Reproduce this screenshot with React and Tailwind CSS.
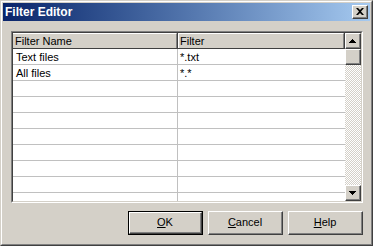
import React from "react";

// classic win2k bevels
const raised = "border border-t-white border-l-white border-r-[#404040] border-b-[#404040]";
const raisedInner = "border border-t-[#d4d0c8] border-l-[#d4d0c8] border-r-[#808080] border-b-[#808080]";

const rows = [
  { name: "Text files", filter: "*.txt" },
  { name: "All files", filter: "*.*" },
];

function ScrollButton({ dir }) {
  return (
    <div className={`w-[16px] h-[16px] bg-[#d4d0c8] ${raised}`}>
      <div className={`w-full h-full flex items-center justify-center ${raisedInner} border-t-0 border-l-0`}>
        <svg width="7" height="4" viewBox="0 0 7 4">
          {dir === "up" ? (
            <path d="M3 0h1v1h1v1h1v1h1v1H0V3h1V2h1V1h1z" fill="#000" />
          ) : (
            <path d="M0 0h7v1H6v1H5v1H4v1H3V3H2V2H1V1H0z" fill="#000" />
          )}
        </svg>
      </div>
    </div>
  );
}

function DlgButton({ children, isDefault }) {
  const inner = (
    <div className={`w-full h-full bg-[#d4d0c8] ${raised}`}>
      <div className={`w-full h-full flex items-center justify-center ${raisedInner} border-t-0 border-l-0 text-[11px] text-black`}>
        {children}
      </div>
    </div>
  );
  return isDefault ? (
    <div className="w-[75px] h-[24px] border border-black">{inner}</div>
  ) : (
    <div className="w-[75px] h-[24px]">{inner}</div>
  );
}

export default function App() {
  const blank = Array.from({ length: 8 });
  return (
    <div className="w-[373px] h-[246px] bg-[#d4d0c8] border border-t-[#d4d0c8] border-l-[#d4d0c8] border-r-[#404040] border-b-[#404040] font-['Liberation_Sans',Arial,sans-serif] select-none">
      <div className="w-full h-full border border-t-white border-l-white border-r-[#808080] border-b-[#808080] p-px flex flex-col">
        {/* title bar */}
        <div className="h-[18px] bg-linear-to-r from-[#0a246a] to-[#a6caf0] flex items-center justify-between pl-[2px] pr-[2px]">
          <span className="text-white font-bold text-[12px] leading-none">Filter Editor</span>
          <div className={`w-[16px] h-[14px] bg-[#d4d0c8] ${raised}`}>
            <div className={`w-full h-full flex items-center justify-center ${raisedInner} border-t-0 border-l-0`}>
              <svg width="8" height="7" viewBox="0 0 8 7">
                <path d="M0 0h2l2 2 2-2h2L5 3.5 8 7H6L4 5 2 7H0l3-3.5z" fill="#000" />
              </svg>
            </div>
          </div>
        </div>

        <div className="flex-1 flex flex-col pl-[8px] pr-[7px] pt-[10px]">
          {/* grid */}
          <div className="h-[172px] border border-t-[#808080] border-l-[#808080] border-r-white border-b-white">
            <div className="w-full h-full border border-t-[#404040] border-l-[#404040] border-r-[#d4d0c8] border-b-[#d4d0c8] flex bg-white">
              <div className="flex-1 flex flex-col overflow-hidden">
                <div className="h-[16px] flex bg-[#d4d0c8] text-[11px] text-black border-b border-[#404040]">
                  <div className="w-[165px] border-r border-[#404040]">
                    <div className="h-full border-r border-[#808080] border-t border-t-white pl-[2px] leading-[13px] pt-px">Filter Name</div>
                  </div>
                  <div className="flex-1 border-r border-[#404040]">
                    <div className="h-full border-r border-[#808080] border-t border-t-white border-l border-l-white pl-[1px] leading-[13px] pt-px">Filter</div>
                  </div>
                </div>
                {rows.map((r) => (
                  <div key={r.name} className="h-[16px] flex text-[11px] text-black border-b border-[#c0c0c0]">
                    <div className="w-[165px] border-r border-[#c0c0c0] pl-[3px] leading-[13px] pt-[2px]">{r.name}</div>
                    <div className="flex-1 pl-[2px] leading-[13px] pt-[2px]">{r.filter}</div>
                  </div>
                ))}
                {blank.map((_, i) => (
                  <div key={i} className="h-[16px] flex shrink-0 border-b border-[#c0c0c0]">
                    <div className="w-[165px] border-r border-[#c0c0c0]" />
                    <div className="flex-1" />
                  </div>
                ))}
                <div className="h-[16px] flex shrink-0">
                  <div className="w-[165px] border-r border-[#c0c0c0]" />
                  <div className="flex-1" />
                </div>
              </div>
              {/* scrollbar */}
              <div className="w-[16px] flex flex-col">
                <ScrollButton dir="up" />
                <div className={`w-[16px] h-[16px] bg-[#d4d0c8] ${raised}`}>
                  <div className={`w-full h-full ${raisedInner} border-t-0 border-l-0`} />
                </div>
                <div className="flex-1 bg-[repeating-conic-gradient(#d4d0c8_0_25%,#ffffff_0_50%)] bg-size-[2px_2px]" />
                <ScrollButton dir="down" />
              </div>
            </div>
          </div>

          {/* buttons */}
          <div className="flex justify-end gap-[5px] mt-[8px]">
            <DlgButton isDefault>
              <span><u className="underline-offset-1">O</u>K</span>
            </DlgButton>
            <DlgButton>
              <span><u className="underline-offset-1">C</u>ancel</span>
            </DlgButton>
            <DlgButton>
              <span><u className="underline-offset-1">H</u>elp</span>
            </DlgButton>
          </div>
        </div>
      </div>
    </div>
  );
}
